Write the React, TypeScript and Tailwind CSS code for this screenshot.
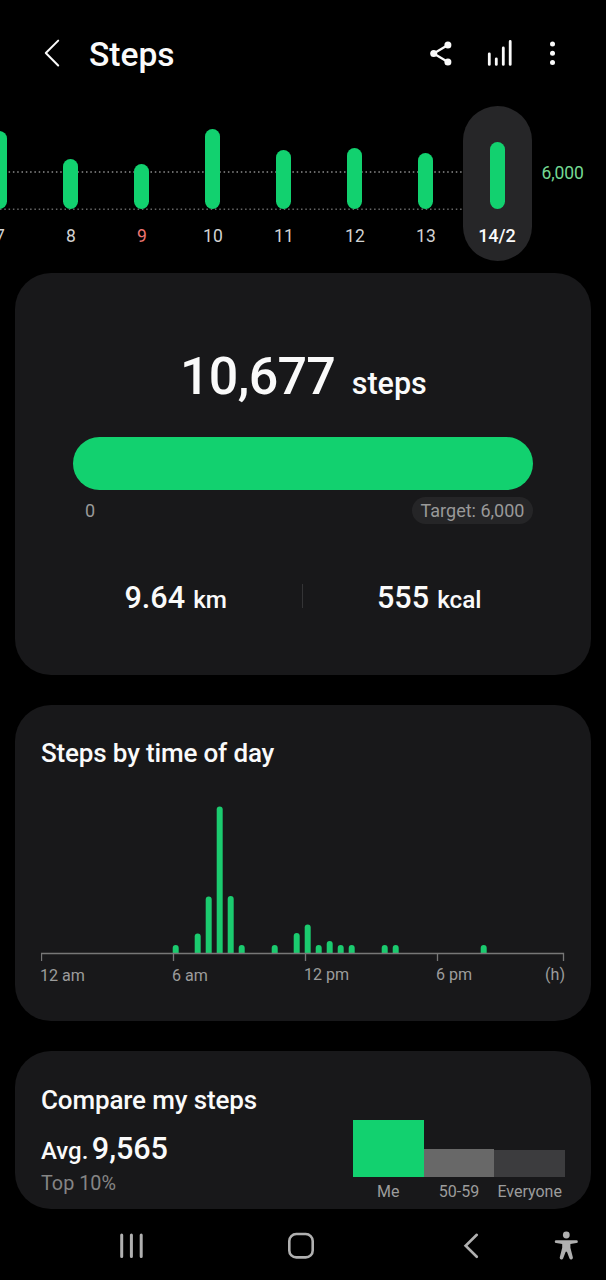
import React from "react";

const days = [
  { label: "7", height: 78.5 },
  { label: "8", height: 50 },
  { label: "9", height: 45, holiday: true },
  { label: "10", height: 80.5 },
  { label: "11", height: 59 },
  { label: "12", height: 61 },
  { label: "13", height: 56.5 },
];

// one slot = half an hour
const slots = [
  { slot: 12, height: 8 },
  { slot: 14, height: 19.5 },
  { slot: 15, height: 56.5 },
  { slot: 16, height: 146.5 },
  { slot: 17, height: 57 },
  { slot: 18, height: 8 },
  { slot: 21, height: 8 },
  { slot: 23, height: 20 },
  { slot: 24, height: 28.5 },
  { slot: 25, height: 8 },
  { slot: 26, height: 12 },
  { slot: 27, height: 8 },
  { slot: 28, height: 8 },
  { slot: 31, height: 8 },
  { slot: 32, height: 8 },
  { slot: 40, height: 8 },
];

const Header = () => (
  <header className="flex h-[106px] shrink-0 items-center pt-[2px]">
    <svg className="ml-[43px]" width="18" height="30" viewBox="0 0 18 30" fill="none" stroke="#fafafa" strokeWidth="2" strokeLinecap="round" strokeLinejoin="round">
      <path d="M15.2 1.6 L2.8 14 L15.2 26.5" />
    </svg>
    <h1 className="ml-[28px] pt-px text-[33.6px] leading-[35px] font-medium">Steps</h1>
    <div className="ml-auto flex items-center">
      <svg width="24" height="26" viewBox="0 0 24 26" fill="#fafafa">
        <path d="M18.9 3.9 L4.7 12.5 L18.9 21.1" fill="none" stroke="#fafafa" strokeWidth="2.3" />
        <circle cx="4.7" cy="12.5" r="3.5" />
        <circle cx="18.9" cy="3.9" r="3.5" />
        <circle cx="18.9" cy="21.1" r="3.5" />
      </svg>
      <svg className="ml-[33px]" width="28" height="28" viewBox="0 0 28 28" stroke="#fafafa" strokeWidth="2.8" strokeLinecap="round">
        <path d="M3.3 13.8 V24.4 M10.3 18.8 V24.4 M17.3 8 V24.4 M24.2 1.4 V24.4" />
      </svg>
      <svg className="mr-[50px] ml-[35px]" width="7" height="26" viewBox="0 0 7 26" fill="#fafafa">
        <circle cx="3.5" cy="3" r="2.5" />
        <circle cx="3.5" cy="12.2" r="2.5" />
        <circle cx="3.5" cy="21.4" r="2.5" />
      </svg>
    </div>
  </header>
);

const WeekChart = () => (
  <section className="relative flex h-[155px] shrink-0 overflow-hidden">
    {/* target and base lines */}
    <svg className="absolute top-0 left-0" width="463" height="155" stroke="#8c8c8c" strokeWidth="1.4">
      <line x1="0" y1="66" x2="463" y2="66" strokeDasharray="1.5 2.8" />
      <line x1="0" y1="103.3" x2="463" y2="103.3" stroke="#666666" strokeDasharray="1.5 2.8" />
    </svg>
    <div className="relative -ml-[35.6px] flex">
      {days.map((day) => (
        <div key={day.label} className="flex w-[71px] flex-col items-center">
          <div className="flex h-[103.4px] items-end">
            <div className="w-[15px] rounded-full bg-[#12d16f]" style={{ height: day.height }} />
          </div>
          <span className={`mt-[17.5px] text-[17.5px] leading-[18px] ${day.holiday ? "text-[#ee7571]" : "text-[#d2d2d2]"}`}>
            {day.label}
          </span>
        </div>
      ))}
    </div>
    <div className="relative ml-[1.1px] flex w-[69px] flex-col items-center rounded-full bg-[#262628]">
      <div className="flex h-[103.4px] items-end">
        <div className="h-[67px] w-[15px] rounded-full bg-[#12d16f]" />
      </div>
      <span className="mt-[17.5px] text-[18px] leading-[18px] font-medium">14/2</span>
    </div>
    <span className="mt-[58px] ml-[10px] text-[17.5px] leading-[18px] tracking-[-0.1px] text-[#74d993]">6,000</span>
  </section>
);

const Summary = () => (
  <section className="mx-[15px] mt-[12px] h-[402px] shrink-0 rounded-[36px] bg-[#18181a] pt-[78px]">
    <div className="ml-[165px] flex items-baseline">
      <span className="text-[52px] leading-[52px] font-medium tracking-[-0.7px]">10,677</span>
      <span className="ml-[16.5px] text-[30.5px] leading-[30px] font-medium">steps</span>
    </div>
    <div className="mt-[34px] ml-[58px] h-[53px] w-[460px] rounded-full bg-[#12d16f]" />
    <div className="mx-[58px] mt-[7px] flex items-center justify-between text-[18px] text-[#999999]">
      <span className="ml-[12px]">0</span>
      <span className="flex h-[27px] w-[121px] items-center justify-center rounded-full bg-[#252527] whitespace-nowrap">
        Target: 6,000
      </span>
    </div>
    <div className="mt-[58px] mr-[36px] ml-[33px] flex font-medium">
      <div className="flex flex-1 items-baseline justify-center gap-[8px] pl-[2px]">
        <span className="text-[30.6px] leading-[31px]">9.64</span>
        <span className="text-[24.3px] leading-[25px]">km</span>
      </div>
      <div className="mt-[2px] h-[24px] w-px bg-[#343436]" />
      <div className="flex flex-1 items-baseline justify-center gap-[8px] pl-px">
        <span className="text-[30.6px] leading-[31px]">555</span>
        <span className="text-[24.3px] leading-[25px]">kcal</span>
      </div>
    </div>
  </section>
);

const TimeOfDay = () => (
  <section className="mx-[15px] mt-[30px] h-[316px] shrink-0 rounded-[36px] bg-[#18181a] px-[26px] pt-[35px]">
    <h2 className="text-[26px] leading-[26px] font-medium tracking-[-0.16px]">Steps by time of day</h2>
    <svg className="mt-[34px]" width="524" height="162" viewBox="0 0 524 162">
      {slots.map(({ slot, height }) => {
        const x = slot * 11 - 0.3;
        const top = 153 - height;
        return (
          <path
            key={slot}
            fill="#1bcb6f"
            d={`M${x} 153 V${top + 3} a3 3 0 0 1 6 0 V153 Z`}
          />
        );
      })}
      <path d="M0.5 161 V153.5 H522.5 V161 M132.5 153 V161 M264.5 153 V161 M396.5 153 V161" fill="none" stroke="#777777" strokeWidth="1.3" />
    </svg>
    <div className="mt-[4px] -ml-px flex items-start text-[16.1px] leading-[17px] text-[#9c9c9c]">
      <span className="w-[132px] pt-px">12 am</span>
      <span className="w-[132px] pt-px">6 am</span>
      <span className="w-[132px]">12 pm</span>
      <span>6 pm</span>
      <span className="ml-auto">(h)</span>
    </div>
  </section>
);

const Compare = () => (
  <section className="mx-[15px] mt-[30px] flex h-[158px] shrink-0 justify-between rounded-[36px] bg-[#18181a] px-[26px]">
    <div className="pt-[36px]">
      <h2 className="text-[26px] leading-[26px] font-medium tracking-[-0.14px]">Compare my steps</h2>
      <div className="mt-[20px] flex items-baseline gap-[3.5px] font-medium">
        <span className="text-[24px] leading-[24px]">Avg.</span>
        <span className="text-[30.6px] leading-[31px] tracking-[-0.1px]">9,565</span>
      </div>
      <p className="mt-[10px] text-[19.8px] leading-[20px] text-[#858585]">Top 10%</p>
    </div>
    <div className="w-[212px] pt-[69px] text-center text-[16px] leading-[16px] text-[#9c9c9c]">
      <div className="grid h-[56.5px] grid-cols-3 items-end">
        <div className="h-[56.5px] bg-[#12d16f]" />
        <div className="h-[28px] bg-[#686868]" />
        <div className="h-[26.5px] bg-[#3c3c3e]" />
      </div>
      <div className="mt-[7px] grid grid-cols-3">
        <span>Me</span>
        <span>50-59</span>
        <span>Everyone</span>
      </div>
    </div>
  </section>
);

const NavBar = () => (
  <nav className="flex h-[71px] shrink-0 items-center pt-[2px]">
    <svg className="ml-[119px]" width="26" height="26" viewBox="0 0 26 26" stroke="#b0b0b0" strokeWidth="3" strokeLinecap="round">
      <path d="M2.7 2 V23.4 M12.4 2 V23.4 M22.2 2 V23.4" />
    </svg>
    <svg className="ml-[142px]" width="28" height="28" viewBox="0 0 28 28" fill="none" stroke="#b0b0b0" strokeWidth="2.6">
      <rect x="2.3" y="2" width="23.4" height="23.4" rx="7" />
    </svg>
    <svg className="ml-[147px]" width="18" height="28" viewBox="0 0 18 28" fill="none" stroke="#b0b0b0" strokeWidth="2.6" strokeLinecap="round">
      <path d="M14.8 2.8 L3.6 13.8 L14.8 24.8" />
    </svg>
    <svg className="ml-[74px]" width="24" height="30" viewBox="0 0 24 30" fill="#b0b0b0">
      <circle cx="12.3" cy="4" r="3.4" />
      <path d="M2.2 9.2 H22.4 a1.3 1.3 0 0 1 0 2.9 L16.4 12.9 V16.8 L18.9 26.6 a1.8 1.8 0 0 1 -3.4 0.9 L12.9 20.8 H11.7 L9.1 27.5 a1.8 1.8 0 0 1 -3.4 -0.9 L8.2 16.8 V12.9 L2.2 12.1 a1.3 1.3 0 0 1 0 -2.9 Z" />
    </svg>
  </nav>
);

const App = () => {
  return (
    <div className="flex h-[1280px] w-[606px] flex-col overflow-hidden bg-black font-['Roboto',sans-serif] text-[#fafafa]">
      <Header />
      <WeekChart />
      <Summary />
      <TimeOfDay />
      <Compare />
      <NavBar />
    </div>
  );
};

export default App;
